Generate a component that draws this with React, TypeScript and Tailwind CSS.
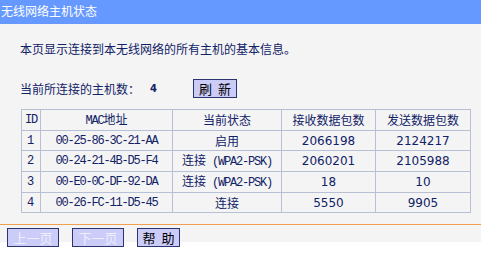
const cjk = '"Noto Sans CJK SC", "DejaVu Sans", sans-serif';
const mono = '"Liberation Mono", "Noto Sans CJK SC", monospace';
const num = '"DejaVu Sans", sans-serif';

const rows = [
  { id: '1', mac: '00-25-86-3C-21-AA', state: '启用', wpa: false, rx: '2066198', tx: '2124217' },
  { id: '2', mac: '00-24-21-4B-D5-F4', state: '连接', wpa: true, rx: '2060201', tx: '2105988' },
  { id: '3', mac: '00-E0-0C-DF-92-DA', state: '连接', wpa: true, rx: '18', tx: '10' },
  { id: '4', mac: '00-26-FC-11-D5-45', state: '连接', wpa: false, rx: '5550', tx: '9905' },
];

function Btn({ label, disabled, w }: { label: string; disabled?: boolean; w: string }) {
  return (
    <button
      className={`${w} h-[19px] border border-[#2c3470] bg-[#ccccf8] text-[13px] leading-[16px] flex items-center justify-center whitespace-pre ${
        disabled ? 'text-[#eeeeff]' : 'text-black'
      }`}
      style={{ fontFamily: cjk }}
    >
      {label}
    </button>
  );
}

export default function App() {
  const cell = 'border border-[#b8c0d6] h-[20px] p-0 text-center';
  return (
    <div className="w-[481px] h-[271px] bg-white overflow-hidden" style={{ fontFamily: cjk }}>
      <div className="h-[242px] bg-[#f4f4f5]">
        <div className="h-[24px] bg-[#6699ff] text-white text-[12px] leading-[14px] pl-[1px] pt-[4px]">
          无线网络主机状态
        </div>
        <p className="mt-[18px] pl-[20px] text-[12px] leading-[14px] text-[#112266]">
          本页显示连接到本无线网络的所有主机的基本信息。
        </p>
        <div className="mt-[23px] flex items-center h-[19px] text-[12px] text-[#112266]">
          <span className="pl-[20px] w-[150px]">当前所连接的主机数：</span>
          <span className="w-[43px] font-bold text-[10px]" style={{ fontFamily: num }}>
            4
          </span>
          <Btn label="刷  新" w="w-[44px]" />
        </div>
        <table className="ml-[21px] mt-[11px] w-[449px] table-fixed border-collapse border border-[#b0b8d0] text-[12px] text-[#112266]">
          <colgroup>
            <col className="w-[19px]" />
            <col className="w-[132px]" />
            <col className="w-[109px]" />
            <col className="w-[94px]" />
            <col className="w-[95px]" />
          </colgroup>
          <thead>
            <tr>
              <th className={`${cell} font-normal text-left pl-[3px] tracking-[-1.2px]`} style={{ fontFamily: mono }}>ID</th>
              <th className={`${cell} font-normal`}>
                <span style={{ fontFamily: mono }} className="tracking-[-1.2px]">MAC</span>地址
              </th>
              <th className={`${cell} font-normal`}>当前状态</th>
              <th className={`${cell} font-normal`}>接收数据包数</th>
              <th className={`${cell} font-normal`}>发送数据包数</th>
            </tr>
          </thead>
          <tbody>
            {rows.map((r) => (
              <tr key={r.id}>
                <td className={`${cell} text-left pl-[5px]`} style={{ fontFamily: mono }}>{r.id}</td>
                <td className={`${cell} tracking-[-1.2px]`} style={{ fontFamily: mono }}>{r.mac}</td>
                <td className={cell}>
                  {r.state}
                  {r.wpa && (
                    <span style={{ fontFamily: mono }} className="tracking-[-1.2px]">
                      {' (WPA2-PSK)'}
                    </span>
                  )}
                </td>
                <td className={cell} style={{ fontFamily: num }}>{r.rx}</td>
                <td className={cell} style={{ fontFamily: num }}>{r.tx}</td>
              </tr>
            ))}
          </tbody>
        </table>
        <div className="mt-[11px] border-t border-[#f0a050]" />
        <div className="mt-[3px] flex pl-[7px] gap-[13px]">
          <Btn label="上一页" disabled w="w-[52px]" />
          <Btn label="下一页" disabled w="w-[52px]" />
          <Btn label="帮  助" w="w-[43px]" />
        </div>
      </div>
    </div>
  );
}
